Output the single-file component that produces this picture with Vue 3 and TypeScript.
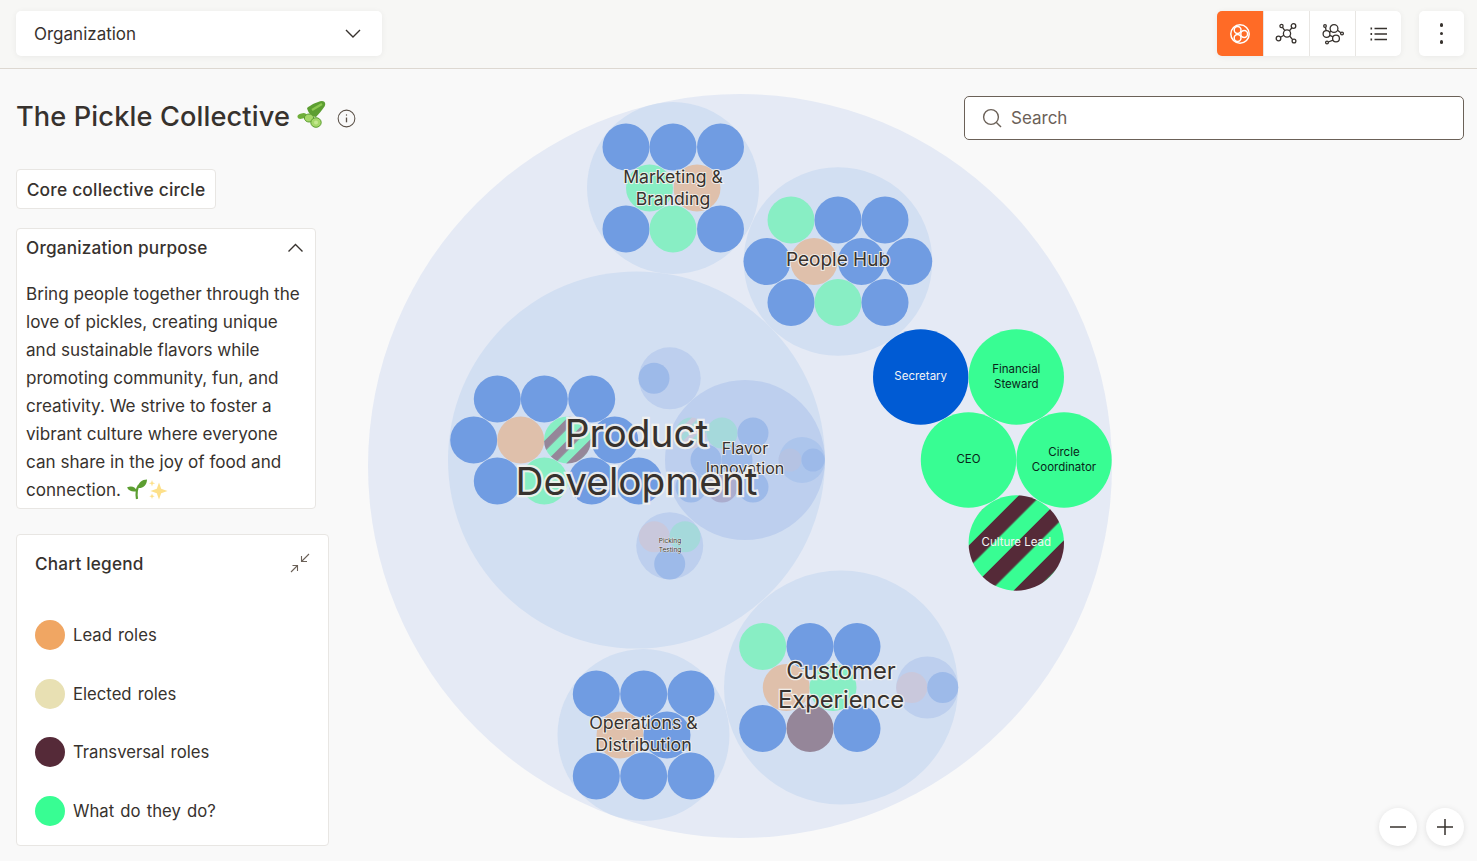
<script setup lang="ts">
interface Dot {
  x: number
  y: number
  r: number
  fill: string
}

interface Label {
  x: number
  y: number
  size: number
  lines: string[]
  gap: number
}

const BLUE = "#709ce2"
const GREEN = "#88eec4"
const PEACH = "#dfc0ab"
const PURPLE = "#958699"
const BG1 = "#e5eaf5"
const BG2 = "#d2dff2"
const BG3 = "#bdcfee"
const SOFT_BLUE = "#9dbae9"
const SOFT_GREY = "#c9c8dc"
const SOFT_TEAL = "#a5d9db"

const dot = (x: number, y: number, fill: string, r = 23.5): Dot => ({ x, y, r, fill })

const circles: Dot[] = [
  dot(740, 466, BG1, 372),
  // Marketing
  dot(673, 188, BG2, 86),
  dot(626, 147, BLUE), dot(673, 147, BLUE), dot(720.5, 147, BLUE),
  dot(649.5, 188, GREEN), dot(697, 188, PEACH),
  dot(626, 229, BLUE), dot(673, 229, GREEN), dot(720.5, 229, BLUE),
  // People hub
  dot(838, 261.5, BG2, 94.3),
  dot(791, 220, GREEN), dot(838, 220, BLUE), dot(885, 220, BLUE),
  dot(767, 261.5, BLUE), dot(814, 261.5, PEACH), dot(861.5, 261.5, BLUE), dot(908.7, 261.5, BLUE),
  dot(791, 302.5, BLUE), dot(838, 302.5, GREEN), dot(885, 302.5, BLUE),
  // Product development
  dot(636.5, 460, BG2, 188.5),
  dot(497.3, 399, BLUE), dot(544.3, 399, BLUE), dot(591.7, 399, BLUE),
  dot(473.7, 440, BLUE), dot(520.7, 440, PEACH), dot(614.7, 440, BLUE),
  dot(497.3, 481, BLUE), dot(544.3, 481, GREEN), dot(591.7, 481, BLUE), dot(638.7, 481, BLUE),
  dot(669.7, 378.3, BG3, 31), dot(654, 378.3, SOFT_BLUE, 15.5),
  dot(669.7, 545.7, BG3, 33.5),
  dot(654.3, 536.7, SOFT_GREY, 15.5), dot(685, 536.7, SOFT_TEAL, 15.5), dot(669.7, 564, SOFT_BLUE, 15.5),
  // Flavor innovation
  dot(745, 460, BG3, 80),
  dot(722, 433, SOFT_TEAL, 15.5), dot(753, 433, SOFT_BLUE, 15.5),
  dot(706, 460, SOFT_BLUE, 15.5), dot(737, 460, SOFT_BLUE, 15.5),
  dot(691, 487, SOFT_BLUE, 15.5), dot(722, 487, "#abadce", 15.5), dot(753, 487, SOFT_BLUE, 15.5),
  dot(802, 460, "#acc5ec", 23), dot(790, 460, "#b5c3e3", 11.5), dot(813, 460, "#9dbae9", 11.5),
  // Customer experience
  dot(841, 687.5, BG2, 117),
  dot(762.7, 646.5, GREEN), dot(810, 646.5, BLUE), dot(857, 646.5, BLUE),
  dot(786.3, 687.5, PEACH), dot(833, 687.5, GREEN),
  dot(762.7, 728.5, BLUE), dot(810, 728.5, PURPLE), dot(857, 728.5, BLUE),
  dot(927.3, 687.5, BG3, 31), dot(911.7, 687.5, SOFT_GREY, 15.5), dot(942.7, 687.5, SOFT_BLUE, 15.5),
  // Operations
  dot(643.5, 735, BG2, 86),
  dot(596.3, 694, BLUE), dot(643.7, 694, BLUE), dot(691, 694, BLUE),
  dot(620, 735, PEACH), dot(667, 735, BLUE),
  dot(596.3, 776, BLUE), dot(643.7, 776, BLUE), dot(691, 776, BLUE),
  // Direct roles of the core circle
  dot(920.7, 377, "#005bd4", 47.7),
  dot(1016.3, 377, "#38fd93", 47.7),
  dot(968.5, 460, "#38fd93", 47.7),
  dot(1064, 460, "#38fd93", 47.7)
]

const circleLabels: Label[] = [
  { x: 745, y: 454, size: 16, lines: ["Flavor", "Innovation"], gap: 20 },
  { x: 670, y: 543, size: 6.5, lines: ["Picking", "Testing"], gap: 9 },
  { x: 673, y: 183, size: 17.6, lines: ["Marketing &", "Branding"], gap: 22 },
  { x: 838, y: 266, size: 19, lines: ["People Hub"], gap: 0 },
  { x: 636.5, y: 447, size: 38.8, lines: ["Product", "Development"], gap: 48 },
  { x: 841, y: 679, size: 23.8, lines: ["Customer", "Experience"], gap: 29 },
  { x: 643.5, y: 729, size: 17.8, lines: ["Operations &", "Distribution"], gap: 22 }
]

const roleLabels = [
  { x: 920.7, y: 380, lines: ["Secretary"], light: true },
  { x: 1016.3, y: 373, lines: ["Financial", "Steward"], light: false },
  { x: 968.5, y: 463, lines: ["CEO"], light: false },
  { x: 1064, y: 456, lines: ["Circle", "Coordinator"], light: false },
  { x: 1016.3, y: 546, lines: ["Culture Lead"], light: true }
]

const legend = [
  { label: "Lead roles", color: "#f0a663" },
  { label: "Elected roles", color: "#e8e0b3" },
  { label: "Transversal roles", color: "#552a38" },
  { label: "What do they do?", color: "#38fd93" }
]
</script>

<template>
  <div class="page">
    <header class="topbar">
      <div class="select">
        <span>Organization</span>
        <svg width="20" height="20" viewBox="0 0 20 20" fill="none" stroke="#37322e" stroke-width="1.4">
          <path d="M3 6l7 7 7-7" />
        </svg>
      </div>
      <div class="tools">
        <div class="toolgroup">
          <button class="tool active">
            <svg width="22" height="22" viewBox="0 0 22 22" fill="none" stroke="#fff" stroke-width="1.5">
              <circle cx="11" cy="11" r="9.2" />
              <circle cx="8.6" cy="7" r="3.4" />
              <circle cx="15.2" cy="11" r="3.4" />
              <circle cx="8.6" cy="15" r="3.4" />
            </svg>
          </button>
          <button class="tool">
            <svg width="24" height="24" viewBox="0 0 24 24" fill="none" stroke="#37322e" stroke-width="1.3">
              <circle cx="12" cy="11.5" r="3.6" />
              <circle cx="18.5" cy="4" r="2.3" />
              <circle cx="6.5" cy="4" r="1.6" />
              <circle cx="3.5" cy="16.5" r="2.3" />
              <circle cx="19" cy="19" r="1.9" />
              <path d="M14.4 8.8l2.6-3M9.8 8.6L7.5 5.3M8.9 13.3l-3.4 2M14.6 14l3 3.6" />
            </svg>
          </button>
          <button class="tool">
            <svg width="24" height="24" viewBox="0 0 24 24" fill="none" stroke="#37322e" stroke-width="1.3">
              <circle cx="13" cy="6.5" r="3.9" />
              <circle cx="5.5" cy="12" r="3.4" />
              <circle cx="15" cy="16.5" r="3.4" />
              <circle cx="4" cy="4" r="1.3" />
              <circle cx="21" cy="11.5" r="1.4" />
              <circle cx="6" cy="20.5" r="1.4" />
              <path d="M4.5 5.3l.6 3.3M16.5 8.2l3.3 2.6M7.3 20l4.8-1.8M8.6 10.3l1.6-1.3M8.8 13.4l3.4 1.4" />
            </svg>
          </button>
          <button class="tool">
            <svg width="20" height="20" viewBox="0 0 20 20" fill="none" stroke="#37322e" stroke-width="1.3">
              <path d="M5.5 4.5h12.5M5.5 10h12.5M5.5 15.5h12.5" />
              <path d="M1.5 4.5h1.6M1.5 10h1.6M1.5 15.5h1.6" stroke-width="1.8" />
            </svg>
          </button>
        </div>
        <button class="more">
          <span class="kebab"></span>
          <span class="kebab"></span>
          <span class="kebab"></span>
        </button>
      </div>
    </header>

    <main class="main">
      <svg class="chart" width="1477" height="792" viewBox="0 69 1477 792">
        <defs>
          <pattern id="stripes" patternUnits="userSpaceOnUse" width="31.8" height="31.8" patternTransform="rotate(45)">
            <rect width="31.8" height="31.8" fill="#38fd93" />
            <rect width="15.5" height="31.8" fill="#552a38" />
          </pattern>
          <pattern id="soft-stripes" patternUnits="userSpaceOnUse" width="31.8" height="31.8" patternTransform="rotate(45)">
            <rect width="31.8" height="31.8" fill="#88eec4" />
            <rect width="15.5" height="31.8" fill="#958699" />
          </pattern>
          <pattern id="faint-stripes" patternUnits="userSpaceOnUse" width="31.8" height="31.8" patternTransform="rotate(45)">
            <rect width="31.8" height="31.8" fill="#a5d9db" />
            <rect width="15.5" height="31.8" fill="#c9c8dc" />
          </pattern>
        </defs>

        <circle v-for="(c, i) in circles" :key="i" :cx="c.x" :cy="c.y" :r="c.r" :fill="c.fill" />
        <g transform="translate(567.5 440) scale(0.4927)">
          <circle r="47.7" fill="url(#soft-stripes)" />
        </g>
        <g transform="translate(691 433) scale(0.325)">
          <circle r="47.7" fill="url(#faint-stripes)" />
        </g>
        <g transform="translate(1016.3 543)">
          <circle r="47.7" fill="url(#stripes)" />
        </g>

        <text
          v-for="l in circleLabels"
          :key="l.lines[0]"
          class="circle-label"
          :style="{ fontSize: `${l.size}px` }"
          :x="l.x"
          :y="l.y"
        >
          <tspan v-for="(line, i) in l.lines" :key="line" :x="l.x" :dy="i ? l.gap : 0">{{ line }}</tspan>
        </text>

        <text
          v-for="l in roleLabels"
          :key="l.lines[0]"
          class="role-label"
          :class="{ light: l.light }"
          :x="l.x"
          :y="l.y"
        >
          <tspan v-for="(line, i) in l.lines" :key="line" :x="l.x" :dy="i ? 15 : 0">{{ line }}</tspan>
        </text>
      </svg>

      <aside class="side">
        <h1 class="title">
          <span>The Pickle Collective</span>
          <svg class="cucumber" width="30" height="30" viewBox="0 0 30 30">
            <path d="M10 8 C14 5 20 1.5 25 1 C28 1 29 4 27.5 6.5 C25 10 22 14 19 17 C15 17 11 13 10 8Z" fill="#5c9e31" />
            <path d="M15 10 L25 4" stroke="#8cc850" stroke-width="2.4" fill="none" />
            <ellipse cx="5" cy="16" rx="4.6" ry="2.6" fill="#6fae3a" transform="rotate(-15 5 16)" />
            <ellipse cx="12" cy="18" rx="4.6" ry="4" fill="#a6d86a" stroke="#5c9e31" />
            <ellipse cx="19" cy="22.5" rx="5.2" ry="4.8" fill="#a6d86a" stroke="#5c9e31" />
            <circle cx="19" cy="22.5" r="2" fill="#c5e890" />
          </svg>
          <svg class="info" width="19" height="19" viewBox="0 0 20 20" fill="none" stroke="#5a5047" stroke-width="1.1">
            <circle cx="10" cy="10" r="8.8" />
            <path d="M10 9v5" stroke-width="1.4" />
            <circle cx="10" cy="6.3" r=".7" fill="#5a5047" stroke="none" />
          </svg>
        </h1>

        <div class="tag">Core collective circle</div>

        <section class="purpose">
          <div class="purpose-head">
            <span>Organization purpose</span>
            <svg width="20" height="20" viewBox="0 0 20 20" fill="none" stroke="#37322e" stroke-width="1.4">
              <path d="M2.5 13.5l7-7 7 7" />
            </svg>
          </div>
          <p>
            Bring people together through the love of pickles, creating unique and sustainable flavors while
            promoting community, fun, and creativity. We strive to foster a vibrant culture where everyone can
            share in the joy of food and connection.
            <svg class="emoji" width="42" height="21" viewBox="0 0 42 21">
              <path d="M11 20 C10 14 11 9 13 6" stroke="#5c9e31" stroke-width="2.2" fill="none" />
              <path d="M12 9 C12 3.5 16 0.5 21 0.5 C21 6 17 9.5 12 9Z" fill="#5c9e31" />
              <path d="M11 12 C9 7.5 5 6.5 1 8.5 C3 12 7 13.5 11 12Z" fill="#5c9e31" />
              <path d="M33 3.5 l2.2 6.3 6.3 2.2 -6.3 2.2 -2.2 6.3 -2.2 -6.3 -6.3 -2.2 6.3 -2.2Z" fill="#fde08a" />
              <path d="M26 1 l.8 2.4 2.4.8 -2.4.8 -.8 2.4 -.8 -2.4 -2.4 -.8 2.4 -.8Z" fill="#fde08a" />
              <path d="M26 14.5 l.7 2 2 .7 -2 .7 -.7 2 -.7 -2 -2 -.7 2 -.7Z" fill="#fde08a" />
            </svg>
          </p>
        </section>

        <section class="legend">
          <div class="legend-head">
            <span>Chart legend</span>
            <svg width="20" height="20" viewBox="0 0 20 20" fill="none" stroke="#6b6158" stroke-width="1.1">
              <path d="M19 1l-7.5 7.5M11.5 3v5.5H17M1 19l6.5-6.5M2.5 12.5h5V18" />
            </svg>
          </div>
          <ul class="legend-list">
            <li v-for="item in legend" :key="item.label">
              <span class="swatch" :style="{ background: item.color }"></span>
              <span>{{ item.label }}</span>
            </li>
          </ul>
        </section>
      </aside>

      <label class="search">
        <svg width="20" height="20" viewBox="0 0 20 20" fill="none" stroke="#6b6158" stroke-width="1.4">
          <circle cx="9" cy="9" r="7.4" />
          <path d="M14.4 14.4l4.6 4.6" />
        </svg>
        <input type="text" placeholder="Search" />
      </label>

      <div class="zoom">
        <button class="zoom-btn">
          <svg width="18" height="18" viewBox="0 0 18 18" stroke="#37322e" stroke-width="1.5"><path d="M1 9h16" /></svg>
        </button>
        <button class="zoom-btn">
          <svg width="18" height="18" viewBox="0 0 18 18" stroke="#37322e" stroke-width="1.5"><path d="M1 9h16M9 1v16" /></svg>
        </button>
      </div>
    </main>
  </div>
</template>

<style>
html,
body {
  margin: 0;
  background: #f9f9f9;
}
</style>

<style scoped>
.page {
  width: 1477px;
  height: 861px;
  overflow: hidden;
  font-family: "Inter", "Liberation Sans", sans-serif;
  color: #37322e;
  background: #f9f9f9;
}

.topbar {
  box-sizing: border-box;
  height: 69px;
  padding: 11px 13px 0 16px;
  display: flex;
  justify-content: space-between;
  align-items: flex-start;
  background: #f7f7f5;
  border-bottom: 1px solid #ddd8d1;
}

.select {
  box-sizing: border-box;
  width: 366px;
  height: 45px;
  padding: 0 19px 0 18px;
  display: flex;
  align-items: center;
  justify-content: space-between;
  background: #fff;
  border-radius: 5px;
  box-shadow: 0 1px 6px rgba(0, 0, 0, 0.06);
  font-size: 17px;
}

.tools {
  display: flex;
  gap: 18px;
}

.toolgroup {
  display: flex;
  gap: 1px;
  background: #e8e6e3;
  border-radius: 5px;
  overflow: hidden;
  box-shadow: 0 1px 6px rgba(0, 0, 0, 0.06);
}

.tool,
.more {
  width: 45px;
  height: 45px;
  padding: 0;
  border: 0;
  background: #fff;
  display: flex;
  align-items: center;
  justify-content: center;
}

.tool.active {
  width: 46px;
  background: #ff6b26;
}

.more {
  flex-direction: column;
  gap: 5px;
  border-radius: 5px;
  box-shadow: 0 1px 6px rgba(0, 0, 0, 0.06);
}

.kebab {
  width: 3.6px;
  height: 3.6px;
  border-radius: 50%;
  background: #37322e;
}

.main {
  position: relative;
  height: 792px;
}

.chart {
  position: absolute;
  left: 0;
  top: 0;
}

.circle-label {
  font-family: "Inter", "Liberation Sans", sans-serif;
  text-anchor: middle;
  fill: #37322e;
  stroke: rgba(243, 242, 239, 0.92);
  stroke-width: 0.11em;
  paint-order: stroke;
}

.role-label {
  font-size: 11.5px;
  text-anchor: middle;
  fill: #08251a;
}

.role-label.light {
  fill: #f4f4f4;
}

.side {
  position: relative;
  width: 329px;
  margin-left: 16px;
  display: flex;
  flex-direction: column;
  align-items: flex-start;
}

.title {
  margin: 30px 0 0;
  height: 35px;
  display: flex;
  align-items: center;
  font-size: 27.2px;
  font-weight: 500;
  letter-spacing: 0.12px;
  white-space: nowrap;
}

.cucumber {
  margin-left: 7px;
  margin-top: -3px;
}

.info {
  margin: 3px 0 0 10px;
}

.tag {
  box-sizing: border-box;
  margin-top: 35px;
  height: 40px;
  width: 200px;
  display: flex;
  align-items: center;
  justify-content: center;
  background: #fff;
  border: 1px solid #e8e6e3;
  border-radius: 4px;
  font-size: 17.4px;
  font-weight: 500;
  letter-spacing: 0.2px;
  white-space: nowrap;
}

.purpose {
  box-sizing: border-box;
  margin-top: 19px;
  width: 300px;
  height: 281px;
  padding: 0 9px;
  background: #fff;
  border: 1px solid #e8e6e3;
  border-radius: 4px;
}

.purpose-head {
  height: 37px;
  display: flex;
  align-items: center;
  justify-content: space-between;
  font-size: 17.2px;
  font-weight: 500;
  letter-spacing: 0.2px;
}

.purpose p {
  margin: 14px 0 0;
  font-size: 17.1px;
  line-height: 28px;
}

.emoji {
  vertical-align: -4px;
}

.legend {
  box-sizing: border-box;
  margin-top: 25px;
  width: 313px;
  height: 312px;
  padding: 18px 18px 0;
  background: #fff;
  border: 1px solid #e8e6e3;
  border-radius: 4px;
}

.legend-head {
  display: flex;
  align-items: center;
  justify-content: space-between;
  height: 20px;
  font-size: 17.2px;
  font-weight: 500;
  letter-spacing: 0.2px;
}

.legend-list {
  list-style: none;
  margin: 47px 0 0;
  padding: 0;
  display: flex;
  flex-direction: column;
  gap: 28.7px;
}

.legend-list li {
  display: flex;
  align-items: center;
  gap: 8px;
  font-size: 16.7px;
  word-spacing: 1.5px;
}

.swatch {
  width: 30px;
  height: 30px;
  border-radius: 50%;
}

.search {
  box-sizing: border-box;
  position: absolute;
  top: 27px;
  left: 964px;
  width: 500px;
  height: 44px;
  padding: 0 17px;
  display: flex;
  align-items: center;
  gap: 9px;
  background: #fff;
  border: 1px solid #6b6158;
  border-radius: 5px;
}

.search input {
  flex: 1;
  border: 0;
  outline: 0;
  padding: 0;
  background: transparent;
  font: inherit;
  font-size: 17px;
}

.search input::placeholder {
  color: #6b6158;
  opacity: 1;
}

.zoom {
  position: absolute;
  right: 13px;
  bottom: 15px;
  display: flex;
  gap: 9px;
}

.zoom-btn {
  width: 38px;
  height: 38px;
  padding: 0;
  border: 0;
  border-radius: 50%;
  background: #fff;
  box-shadow: 0 1px 6px rgba(0, 0, 0, 0.1);
  display: flex;
  align-items: center;
  justify-content: center;
}
</style>
